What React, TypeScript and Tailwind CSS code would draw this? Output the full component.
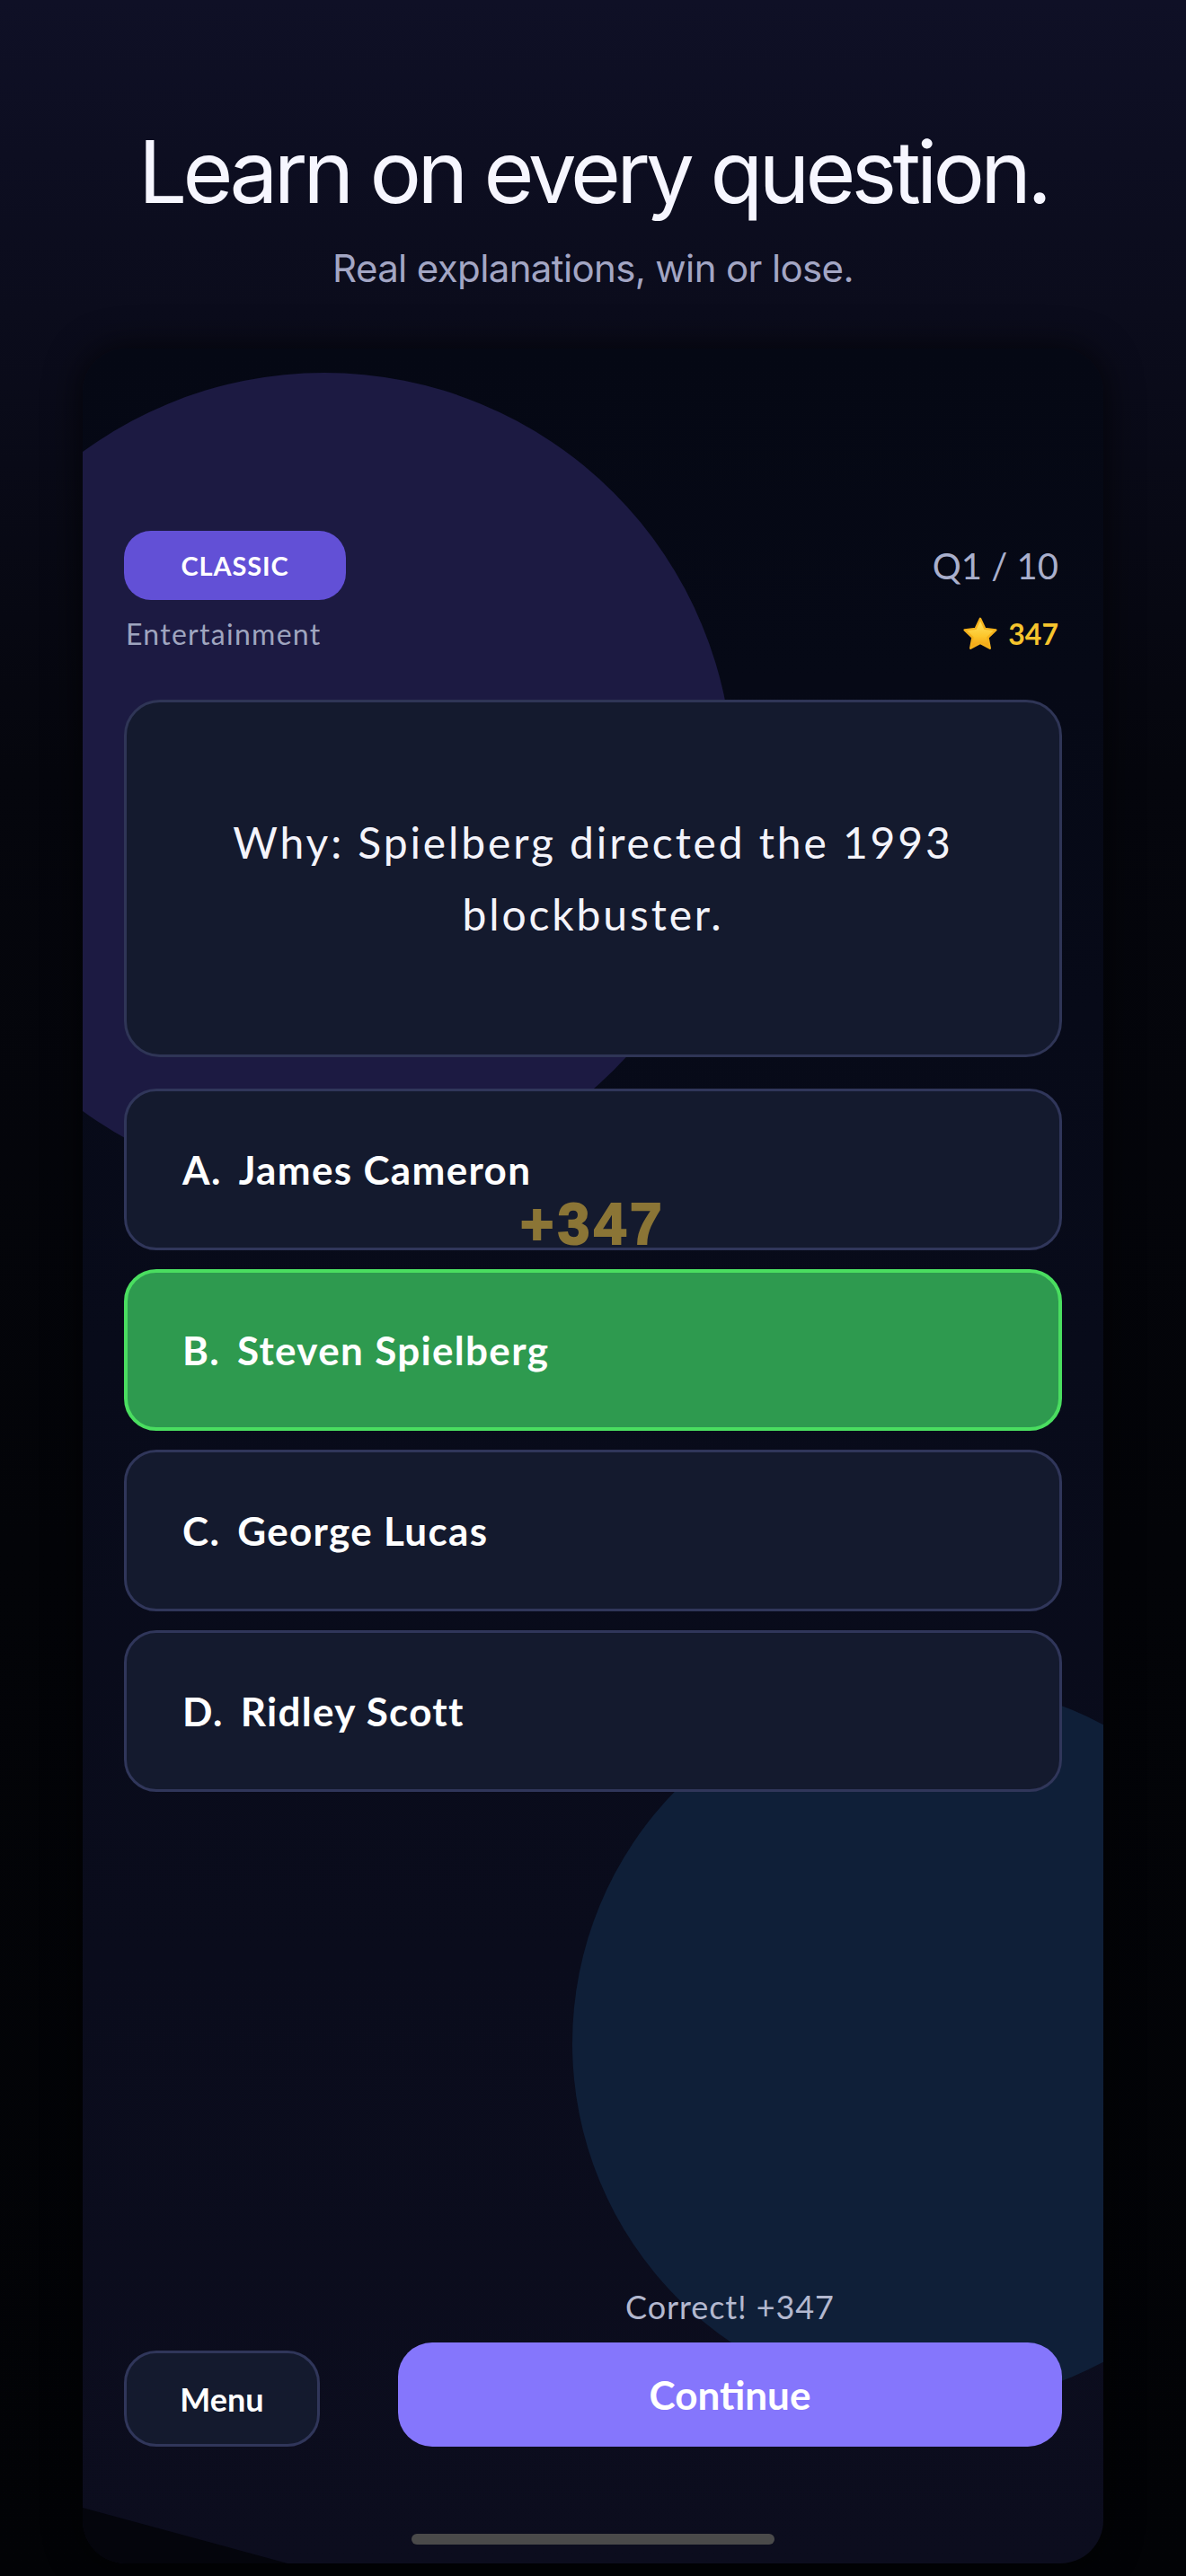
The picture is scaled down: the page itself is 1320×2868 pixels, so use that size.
const answers = [
  { letter: "A.", text: "James Cameron", correct: false },
  { letter: "B.", text: "Steven Spielberg", correct: true },
  { letter: "C.", text: "George Lucas", correct: false },
  { letter: "D.", text: "Ridley Scott", correct: false },
];

const Star = () => (
  <svg width="42" height="40" viewBox="0 0 24 23">
    <defs>
      <linearGradient id="starFill" x1="0" y1="0" x2="0" y2="1">
        <stop offset="0%" stopColor="#ffe46b" />
        <stop offset="60%" stopColor="#fcc62b" />
        <stop offset="100%" stopColor="#f39c12" />
      </linearGradient>
    </defs>
    <path
      d="M12 1.6l3.05 6.4 6.95.85-5.1 4.8 1.3 6.9L12 17.2l-6.2 3.35 1.3-6.9-5.1-4.8 6.95-.85z"
      fill="url(#starFill)"
      stroke="#f5b21c"
      strokeWidth="1.4"
      strokeLinejoin="round"
    />
  </svg>
);

export default function App() {
  return (
    <div className="min-h-[2868px] w-full bg-[linear-gradient(180deg,#0f1026_0%,#0b0c1c_12%,#05060d_30%,#030408_60%,#020306_100%)] flex flex-col items-center font-['Lato','Open_Sans',sans-serif]">
      <h1 className="mt-[143px] font-['Inter',sans-serif] text-[96px] leading-[96px] tracking-[-0.05em] text-[#f6f6ff] font-normal">
        Learn on every question.
      </h1>
      <p className="mt-[35px] font-['Inter',sans-serif] text-[42px] leading-[50px] tracking-[-0.015em] text-[#a3a6c4]">
        Real explanations, win or lose.
      </p>

      <div className="relative mt-[64px] w-[1136px] h-[2466px] rounded-[48px] overflow-hidden bg-[linear-gradient(180deg,#050814_0%,#080b1a_45%,#0c0d1e_100%)] shadow-[0_0_40px_rgba(0,0,0,0.7)]">
        {/* backdrop shapes */}
        <div className="absolute left-[-186px] top-[27px] w-[910px] h-[910px] rounded-full bg-[#1c1a42]" />
        <div className="absolute left-[545px] top-[1485px] w-[804px] h-[804px] rounded-full bg-[#0f1f38]" />
        <div className="absolute left-0 bottom-0 w-[228px] h-[62px] bg-[#04050c] [clip-path:polygon(0_0,100%_100%,0_100%)]" />

        <div className="relative flex flex-col h-full px-[46px] pt-[203px] pb-[21px]">
          <div className="flex items-center justify-between h-[77px]">
            <div className="w-[247px] h-[77px] rounded-[30px] bg-[#6250d6] flex items-center justify-center text-white font-bold text-[29px] tracking-[0.03em]">
              CLASSIC
            </div>
            <div className="text-[40px] text-[#a9afcc] pr-[4px]">Q1 / 10</div>
          </div>
          <div className="mt-[18px] h-[40px] flex items-center justify-between">
            <div className="text-[32px] tracking-[0.04em] text-[#9fa5bf] pl-[2px]">Entertainment</div>
            <div className="flex items-center gap-[10px] pr-[4px]">
              <Star />
              <span className="text-[32px] font-bold text-[#f6c42d]">347</span>
            </div>
          </div>

          <div className="mt-[53px] h-[398px] rounded-[40px] border-[3px] border-[#2f3556] bg-[#141a2e] flex items-center justify-center px-[70px]">
            <p className="text-center text-[48px] leading-[80px] text-[#f4f4fb] tracking-[0.06em]">
              Why: Spielberg directed the 1993 blockbuster.
            </p>
          </div>

          <div className="mt-[35px] flex flex-col gap-[21px]">
            {answers.map((a) => (
              <div
                key={a.letter}
                className={
                  a.correct
                    ? "h-[180px] rounded-[36px] border-[4px] border-[#4ade60] bg-[#2e9a4f] flex items-center pl-[61px] gap-[19px] text-white font-bold text-[44px] tracking-[0.03em]"
                    : "h-[180px] rounded-[36px] border-[3px] border-[#30365a] bg-[#141a2e] flex items-center pl-[62px] gap-[19px] text-white font-bold text-[44px] tracking-[0.03em]"
                }
              >
                <span>{a.letter}</span>
                <span>{a.text}</span>
              </div>
            ))}
          </div>

          <div className="flex-1" />

          <div className="flex items-end justify-between">
            <button className="w-[218px] h-[107px] rounded-[36px] border-[3px] border-[#30365a] bg-[#141a2e] text-white font-bold text-[36px]">
              Menu
            </button>
            <div className="w-[739px] flex flex-col items-center">
              <div className="text-[36px] leading-[40px] tracking-[0.025em] text-[#b3b8cf]">Correct! +347</div>
              <button className="mt-[20px] w-full h-[116px] rounded-[38px] bg-[#8576fc] text-white font-bold text-[44px]">
                Continue
              </button>
            </div>
          </div>

          <div className="mt-[97px] mx-auto w-[404px] h-[12px] rounded-full bg-[#4a4a4a]" />
        </div>

        <div className="absolute left-1/2 -translate-x-1/2 top-[943px] font-['Liberation_Sans',sans-serif] font-bold text-[64px] leading-[64px] tracking-[0.07em] text-[#8b7536] [-webkit-text-stroke:2px_#8b7536]">
          +347
        </div>
      </div>
    </div>
  );
}
